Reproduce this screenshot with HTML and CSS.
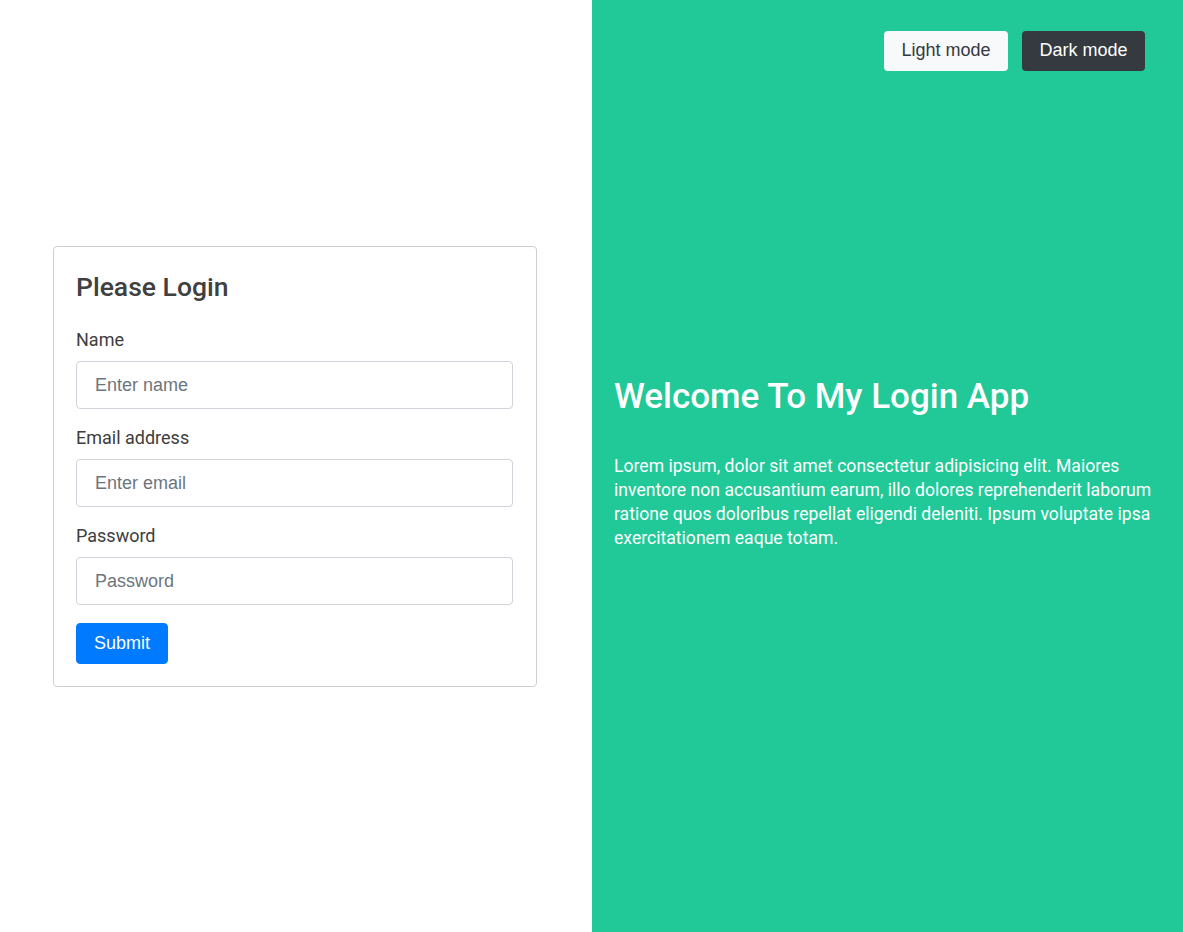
FILE: index.html
```html
<!DOCTYPE html>
<html lang="en">
<head>
<meta charset="utf-8">
<title>Login App</title>
<link rel="stylesheet" href="styles.css">
</head>
<body>
<div class="page">
  <section class="left">
    <form class="card">
      <h4 class="card-title">Please Login</h4>
      <div class="form-group">
        <label class="label" for="name">Name</label>
        <input class="input" id="name" type="text" placeholder="Enter name">
      </div>
      <div class="form-group">
        <label class="label" for="email">Email address</label>
        <input class="input" id="email" type="email" placeholder="Enter email">
      </div>
      <div class="form-group">
        <label class="label" for="password">Password</label>
        <input class="input" id="password" type="password" placeholder="Password">
      </div>
      <button class="btn btn-primary" type="button">Submit</button>
    </form>
  </section>
  <section class="right">
    <div class="mode-switch">
      <button class="btn btn-light" type="button">Light mode</button>
      <button class="btn btn-dark" type="button">Dark mode</button>
    </div>
    <div class="welcome">
      <h2 class="welcome-title">Welcome To My Login App</h2>
      <p class="welcome-text">Lorem ipsum, dolor sit amet consectetur adipisicing elit. Maiores inventore non accusantium earum, illo dolores reprehenderit laborum ratione quos doloribus repellat eligendi deleniti. Ipsum voluptate ipsa exercitationem eaque totam.</p>
    </div>
  </section>
</div>
</body>
</html>
```

FILE: styles.css
```css
* { box-sizing: border-box; }
html, body { margin: 0; padding: 0; }
body {
  font-family: Roboto, "Liberation Sans", Arial, sans-serif;
  font-size: 18px;
  color: #3d3d3d;
  background: #fff;
}
.page {
  display: grid;
  grid-template-columns: 592px 1fr;
  height: 932px;
}
.left {
  display: flex;
  align-items: center;
  justify-content: center;
  padding-right: 2px;
}
.card {
  width: 484px;
  border: 1px solid #cfcfcf;
  border-radius: 4px;
  padding: 22px 23px 22px 22px;
  display: flex;
  flex-direction: column;
  align-items: flex-start;
}
.card-title {
  margin: 0 0 26px;
  padding-top: 2px;
  font-size: 26.5px;
  font-weight: 500;
  line-height: 32px;
  color: #404040;
}
.form-group {
  width: 100%;
  margin-bottom: 18px;
}
.label {
  display: block;
  font-size: 18px;
  line-height: 22px;
  margin-bottom: 10px;
  color: #3d3d3d;
}
.input {
  display: block;
  width: 100%;
  height: 48px;
  padding: 1px 18px 0;
  font-family: "Liberation Sans", Arial, sans-serif;
  font-size: 18px;
  color: #495057;
  border: 1px solid #ced4da;
  border-radius: 4px;
  background: #fff;
  outline: none;
}
.input::placeholder { color: #6c757d; }
.btn {
  font-family: "Liberation Sans", Arial, sans-serif;
  font-size: 18px;
  line-height: 24px;
  padding: 5px 16px 7px;
  border: 1px solid transparent;
  border-radius: 4px;
  cursor: pointer;
}
.btn-primary {
  background: #007bff;
  color: #fff;
  border-color: #007bff;
  height: 41px;
  padding: 6px 17px;
  line-height: 27px;
}
.right {
  position: relative;
  background: #20c997;
  color: #fff;
  display: flex;
  flex-direction: column;
  justify-content: center;
  padding: 0 22px 6px;
}
.mode-switch {
  position: absolute;
  top: 31px;
  right: 38px;
  display: flex;
  gap: 14px;
}
.btn-light {
  background: #f8f9fa;
  color: #343a40;
  height: 40px;
  width: 124px;
}
.btn-dark {
  background: #343a40;
  color: #fff;
  height: 40px;
  width: 123px;
}
.welcome-title {
  margin: 0 0 36px;
  font-size: 35px;
  font-weight: 500;
  line-height: 42px;
}
.welcome-text {
  margin: 0;
  font-size: 17.6px;
  line-height: 24px;
}
```
